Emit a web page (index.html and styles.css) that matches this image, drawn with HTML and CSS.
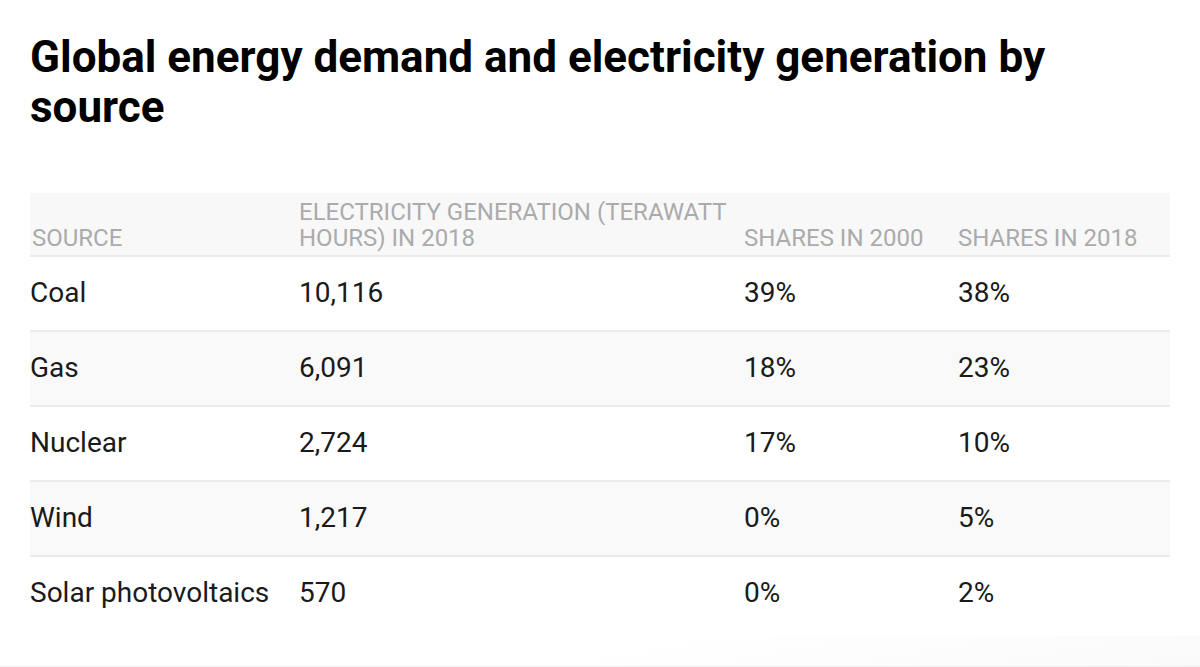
FILE: index.html
```html
<!DOCTYPE html>
<html lang="en">
<head>
<meta charset="utf-8">
<title>Global energy demand and electricity generation by source</title>
<link rel="stylesheet" href="styles.css">
</head>
<body>
<main class="page">
  <h1 class="title">Global energy demand and electricity generation by source</h1>
  <table class="data">
    <colgroup>
      <col class="c-source">
      <col class="c-gen">
      <col class="c-s2000">
      <col class="c-s2018">
    </colgroup>
    <thead>
      <tr>
        <th>SOURCE</th>
        <th>ELECTRICITY GENERATION (TERAWATT HOURS) IN 2018</th>
        <th>SHARES IN 2000</th>
        <th>SHARES IN 2018</th>
      </tr>
    </thead>
    <tbody>
      <tr><td>Coal</td><td>10,116</td><td>39%</td><td>38%</td></tr>
      <tr><td>Gas</td><td>6,091</td><td>18%</td><td>23%</td></tr>
      <tr><td>Nuclear</td><td>2,724</td><td>17%</td><td>10%</td></tr>
      <tr><td>Wind</td><td>1,217</td><td>0%</td><td>5%</td></tr>
      <tr><td>Solar photovoltaics</td><td>570</td><td>0%</td><td>2%</td></tr>
    </tbody>
  </table>
  <div class="footer-edge"></div>
</main>
</body>
</html>
```
FILE: styles.css
```css
html, body {
  margin: 0;
  padding: 0;
  background: #ffffff;
}

body {
  font-family: Roboto, "Liberation Sans", Arial, sans-serif;
  color: #1a1a1a;
}

.page {
  padding: 0 30px;
  height: 667px;
  box-sizing: border-box;
  overflow: hidden;
  position: relative;
}

.title {
  margin: 32px 0 0;
  font-size: 44px;
  line-height: 50px;
  font-weight: 700;
  color: #000;
  letter-spacing: 0;
}

.data {
  margin-top: 61px;
  width: 1140px;
  border-collapse: collapse;
  table-layout: fixed;
}

.c-source { width: 269px; }
.c-gen { width: 445px; }
.c-s2000 { width: 214px; }
.c-s2018 { width: 212px; }

.data thead tr {
  background: #f8f8f8;
  border-bottom: 2px solid #ebebeb;
}

.data th {
  text-align: left;
  vertical-align: bottom;
  font-weight: 400;
  font-size: 24px;
  line-height: 26px;
  color: #ababab;
  padding: 6px 16px 4px 0;
  height: 50px;
}

.data th:first-child {
  padding-left: 2px;
}

.data tbody tr {
  border-bottom: 2px solid #ebebeb;
}

.data tbody tr:last-child {
  border-bottom: none;
}

.data tbody tr:nth-child(even) {
  background: #f9f9f9;
}

.data td {
  font-size: 28px;
  line-height: 40px;
  padding: 16px 16px 17px 0;
  color: #1a1a1a;
  white-space: nowrap;
}

.footer-edge {
  position: absolute;
  left: 0;
  right: 0;
  bottom: 0;
  height: 30px;
  border-bottom: 1px solid #efefef;
  background: linear-gradient(170deg, rgba(255,255,255,0) 50%, rgba(247,247,247,0.7) 100%);
}
```
